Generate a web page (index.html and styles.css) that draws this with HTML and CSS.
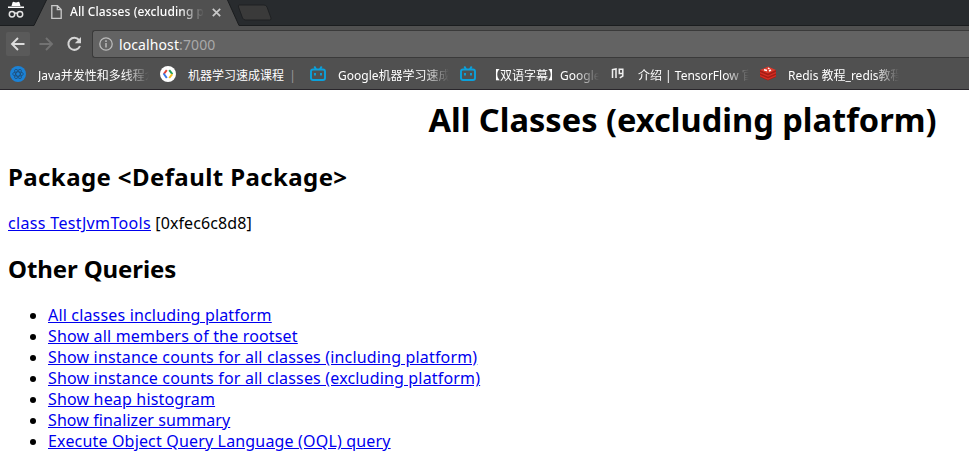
FILE: index.html
```
<!DOCTYPE html>
<html lang="zh-CN">
<head>
<meta charset="utf-8">
<title>All Classes (excluding platform)</title>
<link rel="stylesheet" href="styles.css">
</head>
<body>
<header class="browser">
  <div class="tabs">
    <svg class="tabshape" width="969" height="27" viewBox="0 0 969 27">
      <path d="M0 25.5H34L46.500 0H227.500L239 25.500H969V27H0Z" fill="#505050"/>
      <path d="M0 25.500H34L46.500 0M227.500 0L239 25.500H969" fill="none" stroke="#1b1d1f"/>
      <path d="M239 5h25q2 0 3 2l4 11q.5 2-1.500 2h-24q-2 0-3-2l-4-11q-.5-2 .5-2Z" fill="#3a3a3a" stroke="#1f2123"/>
    </svg>
    <svg class="incognito" width="18" height="18" viewBox="0 0 18 18">
      <path d="M5.500 1.500Q6 .5 7 1l2 .5L11 1q1-.5 1.500.5L13.500 5h-9ZM1 5.500h16v1.600H1Z" fill="#fff"/>
      <g fill="none" stroke="#e4e4e4" stroke-width="1.500"><circle cx="5" cy="13.300" r="2.700"/><circle cx="13" cy="13.300" r="2.700"/><path d="M7.500 12.500q1.500-1 3 0"/></g>
    </svg>
    <svg class="page" width="11" height="14" viewBox="0 0 11 14"><path d="M.8.7h5.700l3.700 3.800v8.800H.8ZM6.300.7v4h4" fill="none" stroke="#c9c9c9" stroke-width="1.300"/></svg>
    <span class="tabtitle fade">All Classes (excluding platform)</span>
    <svg class="close" width="9" height="9" viewBox="0 0 9 9"><path d="M.8.8l7.400 7.400M8.200.8L.8 8.200" stroke="#c9c9c9" stroke-width="1.700"/></svg>
  </div>
  <div class="toolbar">
    <span class="back"><svg width="16" height="16" viewBox="0 0 16 16"><path d="M14.500 8H2M8 2L2 8l6 6" fill="none" stroke="#dcdcdc" stroke-width="1.900"/></svg></span>
    <svg class="fwd" width="16" height="16" viewBox="0 0 16 16"><path d="M1.500 8H14M8 2l6 6-6 6" fill="none" stroke="#727272" stroke-width="1.900"/></svg>
    <svg class="reload" width="16" height="16" viewBox="0 0 16 16"><path d="M13 4A6 6 0 1 0 14 10" fill="none" stroke="#d6d6d6" stroke-width="2"/><path d="M15 1v6.200H8.800Z" fill="#d6d6d6"/></svg>
    <div class="omnibox">
      <svg width="14" height="14" viewBox="0 0 14 14"><circle cx="7" cy="7" r="6.200" fill="none" stroke="#bbb" stroke-width="1.300"/><path d="M7 6v4.500M7 3.300v1.600" stroke="#bbb" stroke-width="1.500"/></svg>
      <span class="url"><span class="host">localhost</span>:7000</span>
    </div>
  </div>
  <nav class="bookmarks">
    <a class="bm"><svg width="16" height="16" viewBox="0 0 16 16"><circle cx="8" cy="8" r="8" fill="#1b82d6"/><g fill="none" stroke="#1d4d78" stroke-width=".8"><ellipse cx="8" cy="8" rx="5.300" ry="2.100"/><ellipse cx="8" cy="8" rx="5.300" ry="2.100" transform="rotate(60 8 8)"/><ellipse cx="8" cy="8" rx="5.300" ry="2.100" transform="rotate(120 8 8)"/></g></svg><span class="label fade">Java并发性和多线程介绍</span></a>
    <a class="bm"><svg width="16" height="16" viewBox="0 0 16 16"><circle cx="8" cy="8" r="8" fill="#fff"/><g fill="none" stroke-width="2"><path d="M6.800 4.200L3.800 8" stroke="#e04436"/><path d="M3.600 7.500L6.800 12" stroke="#3979e8"/><path d="M9.200 4.200L12.400 8.200" stroke="#1fa05b"/><path d="M12.200 8.200L9.200 12" stroke="#f5bd22"/></g></svg><span class="label">机器学习速成课程 <i>|</i></span></a>
    <a class="bm"><svg width="16" height="16" viewBox="0 0 16 16"><path d="M4.300.5L6 3M11.700.5L10 3M3 3.500h10q2 0 2 2v6.500q0 2-2 2H3q-2 0-2-2V5.500q0-2 2-2ZM5 7v2.500M11 7v2.500" fill="none" stroke="#0ba1dc" stroke-width="1.900"/></svg><span class="label fade">Google机器学习速成课程</span></a>
    <a class="bm"><svg width="16" height="16" viewBox="0 0 16 16"><path d="M4.300.5L6 3M11.700.5L10 3M3 3.500h10q2 0 2 2v6.500q0 2-2 2H3q-2 0-2-2V5.500q0-2 2-2ZM5 7v2.500M11 7v2.500" fill="none" stroke="#0ba1dc" stroke-width="1.900"/></svg><span class="label fade">【双语字幕】Google</span></a>
    <a class="bm"><svg width="16" height="16" viewBox="0 0 16 16"><path d="M2.500 3v9M2 3.800l4-.8v9M12.800 7.500H9.300V3.300h3.500V10l-3 1.800" fill="none" stroke="#efefef" stroke-width="1.500"/></svg><span class="label fade">介绍 | TensorFlow 官方</span></a>
    <a class="bm"><svg width="16" height="16" viewBox="0 0 16 16"><path d="M0 4v7L8 14.500l8-3.500V4Z" fill="#a51d15"/><path d="M0 4l8-3.500L16 4 8 7.500Z" fill="#dc3a2c"/><path d="M0 6.600l8 3.500 8-3.500M0 9.600l8 3.500 8-3.500" fill="none" stroke="#d52f24" stroke-width="1.200"/><path d="M4 3.800l3 .7M8 2l1.500 1M9 5l2-1" stroke="#fff" stroke-width="1.400"/></svg><span class="label fade">Redis 教程_redis教程</span></a>
  </nav>
</header>
<main>
  <h1>All Classes (excluding platform)</h1>
  <h2 class="package">Package &lt;Default Package&gt;</h2>
  <p><a class="class-link" href="#">class TestJvmTools</a> [0xfec6c8d8]</p>
  <h2 class="queries">Other Queries</h2>
  <ul>
    <li><a href="#">All classes including platform</a></li>
    <li><a href="#">Show all members of the rootset</a></li>
    <li><a href="#">Show instance counts for all classes (including platform)</a></li>
    <li><a href="#">Show instance counts for all classes (excluding platform)</a></li>
    <li><a href="#">Show heap histogram</a></li>
    <li class="tight"><a href="#">Show finalizer summary</a></li>
    <li><a href="#">Execute Object Query Language (OQL) query</a></li>
  </ul>
</main>
</body>
</html>
```
FILE: styles.css
```
html, body { height: 100%; }
html { overflow: hidden; }
body { margin: 0; background: #fff; color: #000; font: 16px/21px "Noto Sans", "Noto Sans CJK SC", sans-serif; overflow: hidden; }
svg { display: block; flex: none; }
.browser { height: 90px; background: #505050; box-sizing: border-box; border-bottom: 1px solid #29262b; }
.tabs { position: relative; height: 27px; background: #282b2e; display: flex; align-items: flex-start; }
.tabshape { position: absolute; left: 0; top: 0; }
.tabs > :not(.tabshape) { position: relative; }
.incognito { margin: 1px 0 0 7px; }
.page { margin: 5px 0 0 26px; }
.tabtitle { margin: 3px 0 0 8px; width: 134px; height: 18px; font-size: 12px; line-height: 18px; font-weight: 500; letter-spacing: .08px; color: #fff; }
.close { margin: 8px 0 0 8px; }
.fade { overflow: hidden; white-space: nowrap; -webkit-mask-image: linear-gradient(to right, #000 calc(100% - 24px), transparent); mask-image: linear-gradient(to right, #000 calc(100% - 24px), transparent); }
.toolbar { height: 34px; display: flex; align-items: center; }
.back { width: 24px; height: 24px; margin-left: 6px; background: #5a5a5a; border-radius: 2px; display: flex; align-items: center; justify-content: center; }
.fwd { margin-left: 8px; }
.reload { margin-left: 12px; }
.omnibox { margin-left: 10px; flex: 1; height: 28px; box-sizing: border-box; border: 1px solid #3a3a3a; border-right: 0; border-radius: 3px 0 0 3px; background: #636363; display: flex; align-items: center; padding-left: 6px; }
.url { margin-left: 6px; font-size: 14px; letter-spacing: .1px; color: #a9a9a9; }
.host { color: #fff; }
.bookmarks { height: 28px; display: flex; align-items: center; padding-left: 10px; }
.bm { display: flex; align-items: center; width: 150px; flex: none; }
.bm svg { margin-top: -2px; }
.label { margin: 1px 0 0 12px; width: 111px; color: #fff; font-size: 12px; line-height: 18px; white-space: nowrap; }
.label i { font-style: normal; color: #999; margin-left: 2px; }
main { width: 1349px; padding: 0 8px; }
h1 { margin: 0; padding-top: 9px; font-size: 32.6px; line-height: 42px; text-align: center; }
h2 { margin: 20px 0 19px; font-size: 24px; line-height: 32px; }
.package { margin-bottom: 20px; letter-spacing: .4px; }
.queries { margin: 19px 0 20px; letter-spacing: -.1px; }
p { margin: 0; letter-spacing: .1px; }
.class-link { letter-spacing: .34px; }
ul { margin: 0; padding-left: 40px; letter-spacing: .17px; }
.tight { letter-spacing: .1px; }
a[href] { color: #0000ee; text-decoration: underline; }
```
